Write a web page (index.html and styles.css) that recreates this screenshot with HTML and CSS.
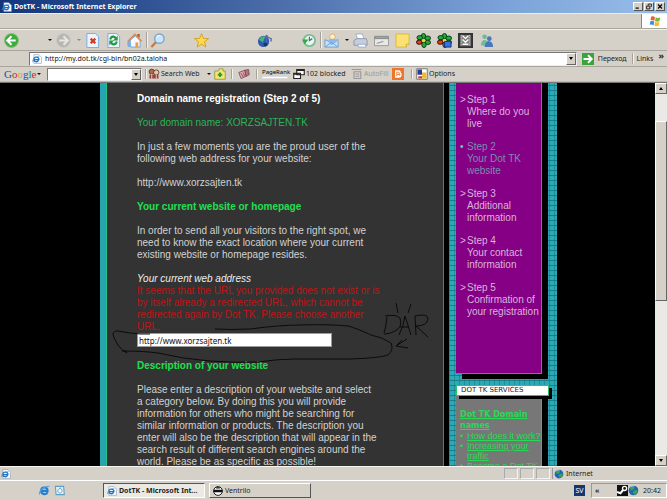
FILE: index.html
```html
<!DOCTYPE html>
<html lang="en">
<head>
<meta charset="utf-8">
<title>DotTK - Microsoft Internet Explorer</title>
<link rel="stylesheet" href="styles.css">
</head>
<body>
<svg class="defs" aria-hidden="true">
  <symbol id="ie" viewBox="0 0 16 16"><path d="M3 1h8l4 4v10H3z" fill="#fff" stroke="#8899b5"/><path d="M2.500 9h8.500c.4-5-8-5.500-8-.3 0 4.500 6 4.500 7.500 1.600" fill="none" stroke="#2172c4" stroke-width="2.200"/><path d="M1 13C-1 9 7 3 12 4" fill="none" stroke="#51a0dc"/></symbol>
  <symbol id="globe" viewBox="0 0 16 16"><circle cx="8" cy="8" r="7" fill="#2461b4"/><path d="M3 4l4-2 3 2-2 3-4 1zM9 8l5-1-1 5-4 2-2-3z" fill="#36a556"/><path d="M4 3q2-2 5-1" stroke="#bfe4ff" fill="none"/></symbol>
  <symbol id="clover" viewBox="0 0 16 16"><g fill="#25a83f" stroke="#063b0d"><ellipse cx="8" cy="3.500" rx="2.300" ry="3"/><ellipse cx="12.500" cy="5.500" rx="3" ry="2.300"/><ellipse cx="12.500" cy="10" rx="3" ry="2.300"/><ellipse cx="8.500" cy="12.500" rx="2.300" ry="3"/><ellipse cx="4" cy="5" rx="3" ry="2.300"/></g><ellipse cx="3.500" cy="9.800" rx="3" ry="2.300" fill="#d84418" stroke="#300"/><circle cx="8.200" cy="8" r="1.600" fill="#e9df39"/></symbol>
</svg>
<div class="window">
  <header class="titlebar">
    <svg class="ico"><use href="#ie"/></svg>
    <span class="title">DotTK - Microsoft Internet Explorer</span>
    <div class="winbtns">
      <button aria-label="Minimize"><svg viewBox="0 0 10 8"><path d="M2 6h4" stroke="#000" stroke-width="1.500"/></svg></button>
      <button aria-label="Restore"><svg viewBox="0 0 10 8"><path d="M4 3V1h4v3H7M2 3.500h4V7H2z" fill="none" stroke="#000"/></svg></button>
      <button aria-label="Close"><svg viewBox="0 0 10 8"><path d="M2.500 1.500l5 5m0-5l-5 5" stroke="#000" stroke-width="1.400"/></svg></button>
    </div>
  </header>
  <div class="menubar"><span class="flag"><svg viewBox="0 0 16 16"><path d="M3 2q3-1 5 1L7 8q-2-2-5-1z" fill="#e8642c"/><path d="M9 3q3 2 6 0l-1 5q-3 2-6 0z" fill="#7cb83f"/><path d="M2 8q3-1 5 1l-1 5q-2-2-5-1z" fill="#3b8be0"/><path d="M8 9q3 2 6 0l-1 5q-3 2-6 0z" fill="#f2bd30"/></svg></span></div>

  <nav class="toolbar" aria-label="Standard buttons">
    <button class="tool labelled" aria-label="Back"><svg viewBox="0 0 16 16"><circle cx="8" cy="8" r="7.400" fill="#3cad38" stroke="#87bd7f"/><path d="M12.500 8H4M8 3.500L3.500 8 8 12.500" fill="none" stroke="#fff" stroke-width="2.200"/></svg></button>
    <button class="caret" aria-label="Back history"></button>
    <button class="tool" aria-label="Forward"><svg viewBox="0 0 16 16"><circle cx="8" cy="8" r="7.400" fill="#b6b6b2" stroke="#c8c8c4"/><path d="M3.500 8H12M8 3.500l4.500 4.500L8 12.500" fill="none" stroke="#e6e6e2" stroke-width="2.200"/></svg></button>
    <button class="caret dim" aria-label="Forward history"></button>
    <button class="tool" aria-label="Stop"><svg viewBox="0 0 16 16"><path d="M2 .5h9l3.500 3.500v11.500H2z" fill="#eaf4ff" stroke="#79a9df"/><path d="M6 6l5 5m0-5l-5 5" stroke="#d83a20" stroke-width="2.400"/></svg></button>
    <button class="tool" aria-label="Refresh"><svg viewBox="0 0 16 16"><path d="M2 .5h9l3.500 3.500v11.500H2z" fill="#eaf4ff" stroke="#79a9df"/><path d="M4.500 7c1-4 5-4 6-1M11.500 9c-1 4-5 4-6 1" fill="none" stroke="#219b35" stroke-width="2.200"/><path d="M12.500 3v5h-5zM3.500 13V8h5z" fill="#219b35"/></svg></button>
    <button class="tool" aria-label="Home"><svg viewBox="0 0 16 16"><path d="M3 8l6-5 5 5v7H4z" fill="#f6f9ff" stroke="#7ba0cf"/><path d="M1 9l7.500-7.500L15.500 9" fill="none" stroke="#d68d4e" stroke-width="1.800"/><path d="M11 1h2.500v4L11 3z" fill="#b6532c"/><path d="M9 10h3v5H9z" fill="#e4a14c"/><path d="M0 10l4-3v8H1z" fill="#7eaee6"/></svg></button>
    <i class="sep"></i>
    <button class="tool labelled" aria-label="Search"><svg viewBox="0 0 16 16"><circle cx="10" cy="6" r="5" fill="#cbe6fa" stroke="#7ba6cb" stroke-width="1.500"/><path d="M7 4q2-2 4-1" stroke="#fff" fill="none"/><path d="M6.300 9.800L1.500 15" stroke="#c57a43" stroke-width="2.400"/></svg></button>
    <button class="tool favourites" aria-label="Favorites"><svg viewBox="0 0 16 16"><path d="M8 .7l2 5.100 5.500.2-4.300 3.400L12.700 15 8 11.800 3.300 15l1.500-5.600L.5 6 6 5.800z" fill="#fbdc4d" stroke="#d5a023"/></svg></button>
    <button class="tool labelled" aria-label="Media"><svg viewBox="0 0 16 16"><circle cx="7" cy="9" r="6" fill="#2b5bb4"/><path d="M2 7q3-5 7-3l-3 6z" fill="#45b47a"/><path d="M10 12V2q1 3 5 4v3" stroke="#5968aa" stroke-width="1.500" fill="none"/><circle cx="9" cy="12" r="2" fill="#19365f"/></svg></button>
    <button class="tool" aria-label="History"><svg viewBox="0 0 16 16"><circle cx="9" cy="8" r="6" fill="#e9f7f2" stroke="#7ebc91" stroke-width="2"/><path d="M9 4v4l3-2" stroke="#477" fill="none" stroke-width="1.300"/><path d="M1 7h7l-4 5z" fill="#38a746"/></svg></button>
    <i class="sep"></i>
    <button class="tool" aria-label="Mail"><svg viewBox="0 0 16 16"><circle cx="9" cy="4" r="3" fill="#fff1c7" stroke="#d8ae73"/><path d="M1 7l7 3 7-3v8H1z" fill="#cae1fa" stroke="#6e9fd0"/><path d="M4 9q0-3 5-3t5 3l-6 4z" fill="#8db9e8"/><path d="M1 15l7-5 7 5" fill="none" stroke="#6e9fd0"/></svg></button>
    <button class="caret" aria-label="Mail menu"></button>
    <button class="tool" aria-label="Print"><svg viewBox="0 0 16 16"><path d="M3 1h7l2 6H5z" fill="#fff" stroke="#9aaec9"/><path d="M1 8l3-2h10l1 2v5H1z" fill="#c6cddb" stroke="#8c98ad"/><path d="M5 12h8l1 3H6z" fill="#fff" stroke="#9aaec9"/></svg></button>
    <button class="tool" aria-label="Edit"><svg viewBox="0 0 16 16"><path d="M.5 3.500h15v10H.5z" fill="#e8e8e6" stroke="#999"/><path d="M1 4h14v2H1zM3 11l7-2" fill="#aaa" stroke="#888"/></svg></button>
    <button class="tool" aria-label="Discuss"><svg viewBox="0 0 16 16"><path d="M1 1h14v11l-3 3H1z" fill="#fbe174" stroke="#dbb73d"/><path d="M15 12h-3v3" fill="#fff4b8" stroke="#c49c2a"/></svg></button>
    <button class="tool" aria-label="ICQ"><svg><use href="#clover"/></svg></button>
    <button class="tool" aria-label="ICQ Lite"><svg viewBox="0 0 16 16"><use href="#clover"/><path d="M8 9h7v6H8z" fill="#3d6ee0" stroke="#123580"/></svg></button>
    <button class="tool" aria-label="Download"><svg viewBox="0 0 16 16"><path d="M1 1h14v14H1z" fill="#777" stroke="#333" stroke-width="2"/><path d="M4 2v12M12 2v12" stroke="#eee" stroke-dasharray="1 1"/><path d="M5 3l3 3 3-3M5 7l3 3 3-3M5 12h6" stroke="#fff" stroke-width="1.500" fill="none"/></svg></button>
    <button class="tool" aria-label="Messenger"><svg viewBox="0 0 16 16"><circle cx="6" cy="4" r="2.500" fill="#6fba9a"/><path d="M2 13q1-7 6-5l1 6z" fill="#6fba9a"/><circle cx="11" cy="6" r="2.500" fill="#4778ba"/><path d="M6 15q1-8 6-6 3 1 3 6z" fill="#4778ba"/></svg></button>
  </nav>

  <div class="addressbar">
    <label class="address"><svg class="ico"><use href="#ie"/></svg><input aria-label="Address" value="http://my.dot.tk/cgi-bin/bn02a.taloha"><span class="drop"></span></label>
    <button class="go"><svg viewBox="0 0 16 16"><path d="M0 0h16v16H0z" fill="#39a33c"/><path d="M2 8h10M8 3l5 5-5 5" stroke="#fff" stroke-width="2.500" fill="none"/></svg>Переход</button>
    <i class="sep"></i>
    <span class="links">Links</span><b class="more">»</b>
  </div>

  <div class="google">
    <span class="logo"><i class="b">G</i><i class="r">o</i><i class="y">o</i><i class="b">g</i><i class="g">l</i><i class="r">e</i></span>
    <button class="caret" aria-label="Google menu"></button>
    <label class="query"><input aria-label="Google search"><span class="drop"></span></label>
    <i class="sep"></i>
    <button class="gtool searchweb"><svg viewBox="0 0 16 16"><circle cx="5" cy="5" r="3.500" fill="#a96b4a" stroke="#522"/><circle cx="11" cy="6" r="3.500" fill="#e4c9a0" stroke="#522"/><path d="M2 9h12v5H2z" fill="#963f34"/><path d="M5 8v6M11 9v5" stroke="#fff"/></svg>Search Web</button>
    <button class="caret" aria-label="Search menu"></button>
    <button class="gtool folder" aria-label="Search site"><svg viewBox="0 0 16 16"><path d="M1 4h5l1-3h5v3h3v11H1z" fill="#f4e571" stroke="#8a8c34"/><path d="M8 6v6M5 9h6" stroke="#319438" stroke-width="2.500"/></svg></button>
    <i class="sep"></i>
    <button class="gtool tag" aria-label="News"><svg viewBox="0 0 16 16"><path d="M1 6l8-3 2 8-7 3z" fill="#e0aab0" stroke="#713c51"/><path d="M9 3l5-1 1 7-4 2z" fill="#b8727f" stroke="#713c51"/><path d="M4 7l3 5M7 6l2 5" stroke="#713c51"/></svg></button>
    <i class="sep"></i>
    <span class="pagerank">PageRank<i></i></span>
    <button class="gtool blocked"><svg viewBox="0 0 16 16"><path d="M5 2h10v7H5zM1 7h9v7H1z" fill="#fff" stroke="#222" stroke-width="1.500"/><path d="M5 3h10M1 8h9" stroke="#222" stroke-width="2"/></svg>102 blocked</button>
    <button class="gtool autofill" disabled><svg viewBox="0 0 16 16"><path d="M1 2h13M4 5h9v9H4zM6 8h5M6 11h5" fill="none" stroke="#999" stroke-width="1.500"/></svg>AutoFill</button>
    <button class="gtool blog" aria-label="BlogThis"><svg viewBox="0 0 16 16"><path d="M0 0h16v16H0z" fill="#ed762b"/><path d="M5 4h4q2 0 2 3 1 0 1 2 0 3-3 3H5zM7 7h2M7 10h3" fill="none" stroke="#fff" stroke-width="1.700"/></svg></button>
    <i class="sep"></i>
    <button class="gtool options"><svg viewBox="0 0 16 16"><path d="M1 1h14v14H1z" fill="#fff" stroke="#565656"/><path d="M2 2h6v7H2z" fill="#243e9a"/><path d="M8 6h6v8H8z" fill="#eebc31"/><path d="M3 11h5v3H3z" fill="#d23b30"/></svg>Options</button>
  </div>

  <div class="viewport">
    <div class="page">
      <main class="content">
        <h1>Domain name registration (Step 2 of 5)</h1>
        <p class="domain">Your domain name: XORZSAJTEN.TK</p>
        <p>In just a few moments you are the proud user of the<br>following web address for your website:</p>
        <p>http://www.xorzsajten.tk</p>
        <h2>Your current website or homepage</h2>
        <p>In order to send all your visitors to the right spot, we<br>need to know the exact location where your current<br>existing website or homepage resides.</p>
        <div class="field">
          <label for="url">Your current web address</label>
          <div class="error">It seems that the URL you provided does not exist or is<br>by itself already a redirected URL, which cannot be<br>redirected again by Dot TK. Please choose another<br>URL.</div>
          <input id="url" value="http://www.xorzsajten.tk">
        </div>
        <h2>Description of your website</h2>
        <p>Please enter a description of your website and select<br>a category below. By doing this you will provide<br>information for others who might be searching for<br>similar information or products. The description you<br>enter will also be the description that will appear in the<br>search result of different search engines around the<br>world. Please be as specific as possible!</p>
        <svg class="scribble" viewBox="106 300 336 70" aria-hidden="true"><path d="M127 353l-2-3M127 353q-6-3-9-8-5-8-5-11 0-3 5-3 10 2 22 3h10M122 351q22 0 36 2 25 6 52 8 25 2 48 1 20-3 37-3h55q30-1 38-4 6-5 3-12-9-6-20-8-15-7-23-9-20-2-48-1-20 0-50 4-20 1-35 0M387 317q-1 10-3 16M385 316q11-2 15 2 3 9-5 13-5 3-11 3M399 335q5-10 6-19l6 19M400 327h9M416 335l-1-19q13-3 13 3-1 7-12 7l12 11M396 303l2 10M411 304l-3 9M408 348l-12-2 6-6M396 346l11-7" fill="none" stroke="#0b0b0b"/></svg>
      </main>
      <aside class="side">
        <ol class="steps">
          <li>Step 1<br>Where do you<br>live</li>
          <li class="current">Step 2<br>Your Dot TK<br>website</li>
          <li>Step 3<br>Additional<br>information</li>
          <li>Step 4<br>Your contact<br>information</li>
          <li>Step 5<br>Confirmation of<br>your registration</li>
        </ol>
        <h3>DOT TK SERVICES</h3>
        <div class="services">
          <a class="head" href="#">Dot TK Domain<br>names</a>
          <ul>
            <li><a href="#">How does it work?</a></li>
            <li><a href="#">Increasing your<br>traffic</a></li>
            <li><a href="#">Become a Dot TK</a></li>
          </ul>
        </div>
      </aside>
    </div>
    <div class="scrollbar"><button class="up" aria-label="Scroll up"></button><i class="thumb"></i><button class="down" aria-label="Scroll down"></button></div>
  </div>

  <div class="statusbar"><span class="msg"><svg class="ico"><use href="#ie"/></svg></span><i></i><i></i><i></i><span class="zone"><svg class="ico"><use href="#globe"/></svg>Internet</span></div>

  <footer class="taskbar">
    <div class="quick"><svg viewBox="0 0 16 16"><path d="M3 8.500h9.500C13 2 3 2 3 8.500c0 6 8 6 9.500 2" fill="none" stroke="#217fd0" stroke-width="3"/><path d="M1 14C-1 9 8 1 15 2" fill="none" stroke="#4ba6e5" stroke-width="1.500"/></svg><svg viewBox="0 0 16 16"><path d="M2 2h12l1 12H3z" fill="#dcecf6" stroke="#5e9fc5" stroke-width="1.500"/><path d="M5 9l4-5 3 5-3 3z" fill="#fff" stroke="#3783b4"/></svg></div>
    <button class="task active"><svg class="ico"><use href="#ie"/></svg>DotTK - Microsoft Int...</button>
    <button class="task"><svg class="ico" viewBox="0 0 16 16"><circle cx="8" cy="8" r="7" fill="#fff" stroke="#111" stroke-width="1.500"/><path d="M1 6h14v4H1zM5 2h6v2H5z" fill="#111"/></svg>Ventrilo</button>
    <span class="lang">SV</span>
    <div class="tray"><b>«</b><svg viewBox="0 0 16 16"><path d="M0 0h16v16H0z" fill="#111"/><circle cx="11" cy="5" r="3" fill="none" stroke="#fff" stroke-width="2"/><path d="M9 7l-4 5-5-2" stroke="#fff" stroke-width="3" fill="none"/></svg><svg><use href="#globe"/></svg><time>20:42</time></div>
  </footer>
</div>
</body>
</html>
```
FILE: styles.css
```css
* { box-sizing: border-box; }
body { margin: 0; background: #000; font: 7px/10px "Noto Sans", "Open Sans", sans-serif; color: #222; }
button, input { font: inherit; color: inherit; margin: 0; padding: 0; border: 0; background: none; }
i { font-style: normal; }
svg { display: block; flex: none; }
.defs { position: absolute; width: 0; height: 0; }
.ico { width: 10px; height: 10px; }
.window { display: flex; flex-direction: column; height: 100vh; overflow: hidden; background: #d5d1c9; }
.window > * { flex: none; }
.sep { align-self: stretch; width: 2px; margin: 2px 0; border-left: 1px solid #a5a29b; border-right: 1px solid #f4f2ee; }

.titlebar { display: flex; align-items: center; gap: 2px; height: 13px; padding: 0 2px; background: linear-gradient(90deg, #12357c, #4669a6 38%, #7ba2d8 75%, #97bee9); color: #fff; }
.title { flex: 1; font-weight: bold; }
.winbtns { display: flex; gap: 1px; }
.winbtns button { width: 10px; height: 9px; background: #d5d1c9; border: 1px solid; border-color: #fff #555 #555 #fff; }
.winbtns svg { width: 8px; height: 7px; }

.menubar { display: flex; justify-content: flex-end; height: 16px; border-top: 1px solid #eee; border-bottom: 1px solid #aaa69e; }
.flag { display: grid; place-items: center; width: 26px; background: #fff; border-left: 1px solid #888; }
.flag svg { width: 12px; height: 12px; }

.toolbar { display: flex; align-items: center; height: 22px; padding-left: 2px; border-top: 1px solid #f3f1ed; border-bottom: 1px solid #aaa69e; }
.tool { width: 21px; padding: 0 2px; }
.tool svg { width: 15px; height: 15px; }
.tool.labelled { width: 44px; }
.tool.favourites { width: 63px; }
.caret { width: 8px; height: 10px; display: grid; place-items: center; }
.caret::before { content: ""; border: 2px solid transparent; border-top-color: #111; border-bottom: 0; }
.caret.dim::before { border-top-color: #888; }

.addressbar { display: flex; align-items: center; height: 15px; padding-left: 29px; padding-right: 3px; }
.address { display: flex; flex: 1; align-items: center; height: 14px; gap: 3px; padding-left: 2px; background: #fff; border: 1px solid #888; border-color: #777 #eee #eee #777; }
.address input { flex: 1; min-width: 0; outline: 0; color: #111; }
.drop { display: grid; place-items: center; align-self: stretch; width: 10px; background: #d5d1c9; border: 1px solid; border-color: #fff #666 #666 #fff; }
.drop::before { content: ""; border: 2px solid transparent; border-top: 3px solid #000; border-bottom: 0; }
.go { display: flex; align-items: center; gap: 4px; margin: 0 5px; }
.go svg { width: 12px; height: 12px; }
.links { margin: 0 5px 0 3px; }
.more { align-self: flex-start; font-size: 9px; }

.google { display: flex; align-items: center; height: 16px; padding-left: 4px; border-top: 1px solid #aaa69e; border-bottom: 1px solid #bbb; }
.logo { width: 31px; font: 11px/12px "Liberation Serif", serif; }
.b { color: #2449b5; } .r { color: #c72a2a; } .y { color: #dba616; } .g { color: #218a3a; }
.query { display: flex; width: 95px; height: 13px; margin: 0 3px 0 4px; background: #fff; border: 1px solid; border-color: #777 #eee #eee #777; }
.query input { flex: 1; min-width: 0; outline: 0; }
.gtool { display: flex; align-items: center; gap: 1px; white-space: nowrap; text-align: left; }
.gtool svg { width: 12px; height: 12px; }
.searchweb { width: 57px; margin-left: 1px; }
.folder { width: 16px; padding-left: 1px; margin-right: 2px; }
.tag { width: 23px; padding-left: 5px; }
.pagerank { width: 35px; padding-left: 4px; font-size: 6px; line-height: 7px; color: #000; }
.pagerank i { display: block; width: 26px; height: 3px; background: #fff; border: 1px solid #ddd; }
.blocked { width: 58px; }
.autofill { width: 41px; color: #999; }
.blog { width: 19px; }
.options { padding-left: 3px; }

.window > .viewport { display: flex; flex: 1; min-height: 0; border-top: 1px solid #777; background: #000; }
.page { display: flex; flex: 1; justify-content: center; overflow: hidden; padding-left: 2px; font: 10px/12px "Liberation Sans", Arial, sans-serif; }
.content { position: relative; flex: none; width: 344px; padding: 10px 28px 0 31px; background: #333; color: #d2d2d2; border-left: 6px solid #2aa3b0; border-right: 1px solid #2b9b49; box-shadow: inset 1px 0 #25c488; white-space: nowrap; }
.content h1, .content h2, .content p { margin: 0 0 12px; font-size: 10px; }
.content h1 { color: #fff; }
.content h2 { color: #1fe050; }
.content .domain { color: #2cb456; }
.field { margin-bottom: 13px; }
.field label { display: block; font-style: italic; color: #eee; }
.error { color: #bd1717; }
.field input { display: block; width: 195px; height: 14px; padding-left: 1px; background: #fff; border: 1px solid #999; color: #111; font: 8px/12px "Noto Sans", sans-serif; }
.scribble { position: absolute; left: 0; top: 217px; width: 336px; height: 70px; }

.side { flex: none; width: 108px; margin-left: 5px; padding: 0 9px 0 7px; background: repeating-linear-gradient(0deg, #17808c 0 1px, transparent 1px 5px), repeating-linear-gradient(90deg, #1c8f9b 0 1px, #2da9b5 1px 5px); }
.steps { list-style: none; margin: 0 6px 11px 0; padding: 11px 0 0 11px; height: 291px; background: #850085; border: 1px solid #7a7a7a; border-top: 0; border-left: 0; box-shadow: 6px -6px #000, 6px 5px #000; color: #dbb3db; white-space: nowrap; }
.steps li { position: relative; margin-bottom: 11px; }
.steps li::before { content: ">"; position: absolute; left: -7px; }
.steps .current { color: #788eb0; }
.steps .current::before { content: "•"; color: #6ed0b5; }
.side h3 { position: relative; z-index: 1; margin: 0 -1px 0 0; padding-left: 4px; background: #fff; border: 1px solid #2cc46b; box-shadow: 3px 3px #000; font: 7px/9px "DejaVu Sans", sans-serif; color: #222; white-space: nowrap; }
.services { margin-right: 6px; padding: 13px 0 0 4px; height: 100px; background: #777; border-right: 1px solid #2cc46b; box-shadow: 6px 0 #000; font: 9px/10px "Liberation Sans", Arial, sans-serif; white-space: nowrap; }
.services a { color: #27da55; }
.services .head { display: block; font: bold 8px/11px "DejaVu Sans", sans-serif; }
.services ul { list-style: none; margin: 0; padding-left: 7px; }
.services li { position: relative; }
.services li::before { content: "•"; position: absolute; left: -7px; color: #27da55; }

.scrollbar { display: flex; flex-direction: column; width: 12px; background: #ebe9e5; }
.scrollbar button, .thumb { background: #d5d1c9; border: 1px solid; border-color: #fff #666 #666 #fff; }
.scrollbar button { display: grid; place-items: center; height: 11px; }
.scrollbar button::before { content: ""; border: 2px solid transparent; border-top-width: 0; border-bottom: 3px solid #000; }
.scrollbar .down::before { border-width: 3px 2px 0; border-color: #000 transparent; }
.thumb { flex: none; height: 180px; margin-top: 27px; }
.scrollbar .down { margin-top: auto; }

.statusbar { display: flex; align-items: center; height: 14px; padding: 1px 0; border-top: 1px solid #f7f5f0; }
.statusbar .msg { flex: 1; padding-left: 1px; }
.statusbar i { align-self: stretch; width: 14px; margin-right: 2px; border: 1px solid; border-color: #aaa #f3f3f3 #f3f3f3 #aaa; }
.zone { display: flex; align-items: center; gap: 2px; align-self: stretch; width: 115px; padding-left: 1px; border-left: 1px solid #999; }

.taskbar { display: flex; align-items: center; gap: 4px; height: 20px; border-top: 1px solid #fff; }
.quick { display: flex; gap: 4px; width: 99px; padding-left: 39px; }
.quick svg { width: 11px; height: 11px; }
.task { display: flex; align-items: center; gap: 2px; width: 102px; height: 15px; padding-left: 3px; border: 1px solid; border-color: #fff #555 #555 #fff; white-space: nowrap; }
.task.active { font-weight: bold; background: #ebe9e4; border-color: #555 #fff #fff #555; }
.lang { margin-left: auto; width: 11px; line-height: 11px; background: #17356f; color: #fff; text-align: center; }
.tray { display: flex; align-items: center; width: 76px; height: 15px; margin-left: 2px; padding: 0 5px 0 3px; border: 1px solid; border-color: #999 #fff #fff #999; }
.tray b { flex: 1; }
.tray svg { width: 11px; height: 11px; }
.tray time { margin-left: 4px; }
```
